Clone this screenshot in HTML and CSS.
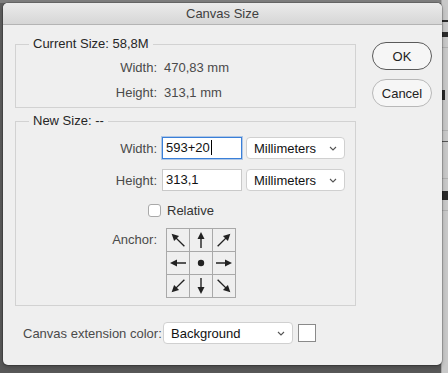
FILE: index.html
```html
<!DOCTYPE html>
<html lang="en">
<head>
    <meta charset="UTF-8">
    <title>Canvas Size</title>
    <link rel="stylesheet" href="styles.css">
</head>
<body>
    <div class="screen">
        <div class="dialog">
            <div class="titlebar">Canvas Size</div>
            <div class="dialog-body">
                <div class="groups">
                    <fieldset class="group group-current">
                        <legend>Current Size: 58,8M</legend>
                        <div class="row">
                            <span class="label">Width:</span>
                            <span class="value">470,83 mm</span>
                        </div>
                        <div class="row">
                            <span class="label">Height:</span>
                            <span class="value">313,1 mm</span>
                        </div>
                    </fieldset>
                    <fieldset class="group group-new">
                        <legend>New Size: --</legend>
                        <div class="row field-row">
                            <span class="label">Width:</span>
                            <div class="field focused">593+20<span class="caret"></span></div>
                            <div class="select unit-select">Millimeters
                                <svg class="chevron" width="8" height="5" viewBox="0 0 8 5"><path d="M1 1l3 3 3-3" fill="none" stroke="#555" stroke-width="1.1"/></svg>
                            </div>
                        </div>
                        <div class="row field-row">
                            <span class="label">Height:</span>
                            <div class="field">313,1</div>
                            <div class="select unit-select">Millimeters
                                <svg class="chevron" width="8" height="5" viewBox="0 0 8 5"><path d="M1 1l3 3 3-3" fill="none" stroke="#555" stroke-width="1.1"/></svg>
                            </div>
                        </div>
                        <div class="check-row">
                            <span class="checkbox"></span>
                            <span>Relative</span>
                        </div>
                        <div class="row anchor-row">
                            <span class="label">Anchor:</span>
                            <div class="anchor-grid">
                                <div class="cell"><svg width="22" height="22" viewBox="0 0 22 22"><g transform="rotate(-45 11 11)"><path d="M11 20V8" stroke="#222" stroke-width="1.4"/><path d="M11 2l-3.5 7h7z" fill="#222"/></g></svg></div>
                                <div class="cell"><svg width="22" height="22" viewBox="0 0 22 22"><path d="M11 19V8" stroke="#222" stroke-width="1.4"/><path d="M11 3l-3.5 7h7z" fill="#222"/></svg></div>
                                <div class="cell"><svg width="22" height="22" viewBox="0 0 22 22"><g transform="rotate(45 11 11)"><path d="M11 20V8" stroke="#222" stroke-width="1.4"/><path d="M11 2l-3.5 7h7z" fill="#222"/></g></svg></div>
                                <div class="cell"><svg width="22" height="22" viewBox="0 0 22 22"><g transform="rotate(-90 11 11)"><path d="M11 19V8" stroke="#222" stroke-width="1.4"/><path d="M11 3l-3.5 7h7z" fill="#222"/></g></svg></div>
                                <div class="cell"><svg width="22" height="22" viewBox="0 0 22 22"><circle cx="11" cy="11" r="3.2" fill="#222"/></svg></div>
                                <div class="cell"><svg width="22" height="22" viewBox="0 0 22 22"><g transform="rotate(90 11 11)"><path d="M11 19V8" stroke="#222" stroke-width="1.4"/><path d="M11 3l-3.5 7h7z" fill="#222"/></g></svg></div>
                                <div class="cell"><svg width="22" height="22" viewBox="0 0 22 22"><g transform="rotate(-135 11 11)"><path d="M11 20V8" stroke="#222" stroke-width="1.4"/><path d="M11 2l-3.5 7h7z" fill="#222"/></g></svg></div>
                                <div class="cell"><svg width="22" height="22" viewBox="0 0 22 22"><g transform="rotate(180 11 11)"><path d="M11 19V8" stroke="#222" stroke-width="1.4"/><path d="M11 3l-3.5 7h7z" fill="#222"/></g></svg></div>
                                <div class="cell"><svg width="22" height="22" viewBox="0 0 22 22"><g transform="rotate(135 11 11)"><path d="M11 20V8" stroke="#222" stroke-width="1.4"/><path d="M11 2l-3.5 7h7z" fill="#222"/></g></svg></div>
                            </div>
                        </div>
                    </fieldset>
                </div>
                <div class="buttons">
                    <button class="btn btn-default">OK</button>
                    <button class="btn">Cancel</button>
                </div>
            </div>
            <div class="footer">
                <span class="footer-label">Canvas extension color:</span>
                <div class="select color-select">Background
                    <svg class="chevron" width="8" height="5" viewBox="0 0 8 5"><path d="M1 1l3 3 3-3" fill="none" stroke="#555" stroke-width="1.1"/></svg>
                </div>
                <span class="swatch"></span>
            </div>
        </div>
        <div class="side-panel">
            <div class="mark mark-dash"></div>
            <div class="mark mark-stamp"></div>
            <div class="panel-line"></div>
            <div class="mark mark-tall"></div>
            <div class="panel-line"></div>
            <div class="mark mark-thin"></div>
            <div class="panel-line"></div>
            <div class="mark mark-block"></div>
            <div class="panel-line"></div>
        </div>
    </div>
</body>
</html>
```

FILE: styles.css
```css
body {
    margin: 0;
    padding: 0;
    font-family: "Liberation Sans", Arial, sans-serif;
    font-size: 13px;
    color: #3c3c3c;
}

.screen {
    display: flex;
    width: 448px;
    height: 373px;
    overflow: hidden;
    background: linear-gradient(to bottom, #7e7e7e 0, #7e7e7e 3px, #5e5e5e 3px, #585858 100%);
}

.dialog {
    width: 439px;
    height: 362px;
    margin: 3px 0 0 3px;
    background-color: #efefef;
    border-radius: 5px;
    box-shadow: 0 0 0 1px rgba(0, 0, 0, 0.18), 0 2px 4px rgba(0, 0, 0, 0.25);
    overflow: hidden;
    position: relative; /* stays above the side panel */
    z-index: 1;
}

.titlebar {
    height: 21px;
    line-height: 21px;
    text-align: center;
    color: #404040;
    background: linear-gradient(to bottom, #ebebeb, #d6d6d6);
    border-bottom: 1px solid #b4b4b4;
}

.dialog-body {
    display: flex;
}

.groups {
    width: 341px;
    margin-left: 12px;
}

.group {
    margin: 0;
    padding: 0;
    min-inline-size: 0;
    border: 1px solid #d2d2d2;
}

.group legend {
    margin-left: 13px;
    padding: 0 4px;
    line-height: 16px;
    color: #262626;
}

.group-current {
    margin-top: 11px;
    padding: 5px 0 5px;
}

.group-new {
    margin-top: 5px;
    padding: 8px 0 7px;
}

.row {
    display: flex;
    align-items: center;
    height: 20px;
}

.group-current .row + .row {
    margin-top: 5px;
}

.label {
    width: 146px;
    padding-right: 5px;
    box-sizing: border-box;
    text-align: right;
    color: #4a4a4a;
}

.value {
    padding-left: 2px;
    color: #4a4a4a;
}

.field-row {
    height: 22px;
}

.field-row + .field-row {
    margin-top: 10px;
}

.field {
    width: 80px;
    height: 22px;
    box-sizing: border-box;
    padding: 0 3px;
    line-height: 20px;
    background: #fff;
    border: 1px solid #c9c9c9;
    color: #111;
}

.field.focused {
    border-color: #3a7fd8;
    box-shadow: 0 0 0 1px rgba(58, 127, 216, 0.35);
}

.caret {
    display: inline-block;
    width: 1px;
    height: 15px;
    margin-left: 1px;
    vertical-align: -3px;
    background: #000;
}

.select {
    display: flex;
    align-items: center;
    justify-content: space-between;
    height: 22px;
    box-sizing: border-box;
    padding: 0 7px 0 7px;
    background: #fff;
    border: 1px solid #d0d0d0;
    border-radius: 4px;
    color: #111;
}

.unit-select {
    width: 99px;
    margin-left: 4px;
}

.check-row {
    display: flex;
    align-items: center;
    height: 18px;
    margin-top: 10px;
    padding-left: 132px;
    color: #333;
}

.checkbox {
    width: 11px;
    height: 11px;
    margin-right: 6px;
    background: #fff;
    border: 1px solid #a9a9a9;
    border-radius: 3px;
}

.anchor-row {
    height: auto;
    align-items: flex-start;
    margin-top: 9px;
}

.anchor-row .label {
    line-height: 23px;
}

.anchor-grid {
    display: grid;
    grid-template-columns: repeat(3, 22px);
    grid-auto-rows: 22px;
    gap: 1px;
    padding: 1px;
    margin-left: 4px;
    background: #a9a9a9;
}

.cell {
    background: #efefef;
}

.cell svg {
    display: block;
}

.buttons {
    display: flex;
    flex-direction: column;
    margin-left: 16px;
    padding-top: 17px;
}

.btn {
    width: 60px;
    height: 28px;
    padding: 0;
    font-family: inherit;
    font-size: 13px;
    color: #222;
    background: #f6f6f6;
    border: 1px solid #b8b8b8;
    border-radius: 14px;
}

.btn-default {
    border-color: #5a5a5a;
}

.btn + .btn {
    margin-top: 9px;
}

.footer {
    display: flex;
    align-items: center;
    height: 22px;
    margin-top: 16px;
    padding-left: 20px;
}

.footer-label {
    width: 140px;
    white-space: nowrap;
    color: #4a4a4a;
}

.color-select {
    width: 130px;
}

.swatch {
    width: 16px;
    height: 16px;
    margin-left: 5px;
    background: #fff;
    border: 1px solid #8a8a8a;
}

.side-panel {
    flex: 1;
    margin-left: -1px;
    background: #c8c8c8;
    border-left: 1px solid #a8a8a8;
}

.panel-line {
    height: 1px;
    background: #b0b0b0;
}

.mark {
    background: #2a2a2a;
}

.mark-dash {
    height: 2px;
    margin-top: 20px;
    width: 6px;
}

.mark-stamp {
    height: 5px;
    margin-top: 10px;
    margin-bottom: 10px;
}

.mark-tall {
    height: 10px;
    width: 3px;
    margin-top: 42px;
    margin-bottom: 30px;
}

.mark-thin {
    height: 1px;
    margin-top: 10px;
    margin-bottom: 36px;
    background: #555;
}

.mark-block {
    height: 9px;
    margin-top: 12px;
    margin-bottom: 10px;
}
```
